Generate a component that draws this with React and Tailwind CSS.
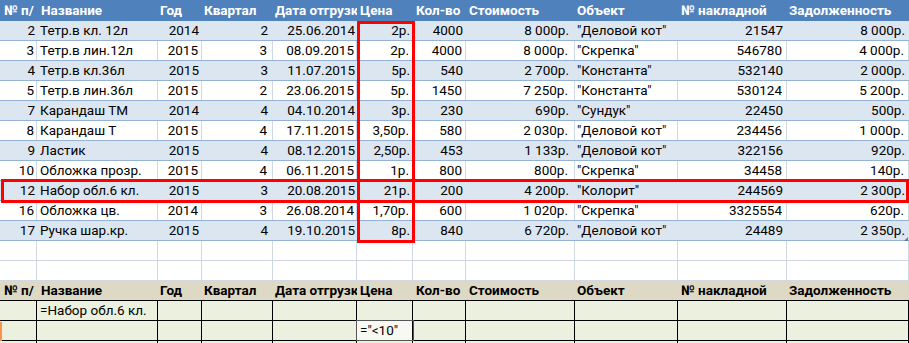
import React from "react";

const COLS = "grid grid-cols-[37px_121px_44px_71px_84px_56px_53px_109px_103px_109px_122px]";

const HEAD = [
  "№ п/",
  "Название",
  "Год",
  "Квартал",
  "Дата отгрузк",
  "Цена",
  "Кол-во",
  "Стоимость",
  "Объект",
  "№ накладной",
  "Задолженность",
];

const ROWS = [
  [2, "Тетр.в кл. 12л", 2014, 2, "25.06.2014", "2р.", 4000, "8 000р.", '"Деловой кот"', 21547, "8 000р."],
  [3, "Тетр.в лин.12л", 2015, 3, "08.09.2015", "2р.", 4000, "8 000р.", '"Скрепка"', 546780, "4 000р."],
  [4, "Тетр.в кл.36л", 2015, 3, "11.07.2015", "5р.", 540, "2 700р.", '"Константа"', 532140, "2 000р."],
  [5, "Тетр.в лин.36л", 2015, 2, "23.06.2015", "5р.", 1450, "7 250р.", '"Константа"', 530124, "5 200р."],
  [7, "Карандаш ТМ", 2014, 4, "04.10.2014", "3р.", 230, "690р.", '"Сундук"', 22450, "500р."],
  [8, "Карандаш Т", 2015, 4, "17.11.2015", "3,50р.", 580, "2 030р.", '"Деловой кот"', 234456, "1 000р."],
  [9, "Ластик", 2015, 4, "08.12.2015", "2,50р.", 453, "1 133р.", '"Деловой кот"', 322156, "920р."],
  [10, "Обложка прозр.", 2015, 4, "06.11.2015", "1р.", 800, "800р.", '"Скрепка"', 34458, "140р."],
  [12, "Набор обл.6 кл.", 2015, 3, "20.08.2015", "21р.", 200, "4 200р.", '"Колорит"', 244569, "2 300р."],
  [16, "Обложка цв.", 2014, 3, "26.08.2014", "1,70р.", 600, "1 020р.", '"Скрепка"', 3325554, "620р."],
  [17, "Ручка шар.кр.", 2015, 4, "19.10.2015", "8р.", 840, "6 720р.", '"Деловой кот"', 24489, "2 350р."],
];

const ALIGN = [
  "justify-end pr-[2px]",
  "justify-start pl-[3px]",
  "justify-end pr-[3px]",
  "justify-end pr-[5px]",
  "justify-end pr-[2px]",
  "justify-end pr-[3px]",
  "justify-end pr-[3px]",
  "justify-end pr-[6px]",
  "justify-start pl-[2px]",
  "justify-end pr-[4px]",
  "justify-end pr-[4px]",
];

const HALIGN = [
  "pl-[4px]",
  "pl-[4px]",
  "pl-[2px]",
  "pl-[2px]",
  "pl-[2px]",
  "pl-[3px]",
  "pl-[3px]",
  "pl-[3px]",
  "pl-[2px]",
  "pl-[3px]",
  "pl-[2px]",
];

function BlueHeader() {
  return (
    <div className={`${COLS} h-[21px] bg-[#4F81BD] text-white font-bold`}>
      {HEAD.map((h, i) => (
        <div key={i} className={`flex items-center overflow-hidden whitespace-nowrap ${HALIGN[i]}`}>
          {h}
        </div>
      ))}
    </div>
  );
}

function DataRow({ row, band }) {
  return (
    <div
      className={`${COLS} h-[20px] border-b border-[#95B3D7] ${band ? "bg-[#DCE6F1]" : "bg-white"}`}
    >
      {row.map((v, i) => (
        <div
          key={i}
          className={`flex items-center overflow-hidden whitespace-nowrap ${ALIGN[i]} ${
            band ? "" : "border-r border-[#D0D7E5]"
          }`}
        >
          {v}
        </div>
      ))}
    </div>
  );
}

function EmptyRow() {
  return (
    <div className={`${COLS} h-[20px] border-b border-[#D0D7E5] bg-white`}>
      {HEAD.map((_, i) => (
        <div key={i} className="border-r border-[#D0D7E5]" />
      ))}
    </div>
  );
}

function TanHeader() {
  return (
    <div className={`${COLS} h-[20px] bg-[#DDD9C4] font-bold text-black border-b border-black`}>
      {HEAD.map((h, i) => (
        <div key={i} className={`flex items-center overflow-hidden whitespace-nowrap ${HALIGN[i]}`}>
          {h}
        </div>
      ))}
    </div>
  );
}

function GreenRow({ cells }) {
  return (
    <div className={`${COLS} h-[20px] bg-[#EBF1DE] border-b border-black`}>
      {HEAD.map((_, i) => {
        const c = cells[i];
        const sel = c && c.sel;
        return (
          <div
            key={i}
            className={`flex items-center overflow-hidden whitespace-nowrap pl-[3px] border-r border-black ${
              sel ? "bg-[#F7F9F2] outline outline-1 outline-[#555]" : ""
            }`}
          >
            {c ? c.text : ""}
          </div>
        );
      })}
    </div>
  );
}

export default function App() {
  return (
    <div
      className="relative w-[909px] h-[343px] overflow-hidden bg-white text-black text-[13.5px] leading-none"
      style={{ fontFamily: "Roboto, 'Liberation Sans', sans-serif" }}
    >
      <BlueHeader />
      {ROWS.map((r, i) => (
        <DataRow key={i} row={r} band={i % 2 === 0} />
      ))}
      <EmptyRow />
      <EmptyRow />
      <TanHeader />
      <GreenRow cells={{ 1: { text: "=Набор обл.6 кл." } }} />
      <GreenRow cells={{ 5: { text: '="<10"', sel: true } }} />
      <div className={`${COLS} h-[20px] bg-[#EBF1DE]`}>
        {HEAD.map((_, i) => (
          <div key={i} className="border-r border-black" />
        ))}
      </div>

      {/* annotations */}
      <div className="absolute left-[357px] top-[21px] w-[58px] h-[222px] border-[3px] border-[#FF0000]" />
      <div className="absolute left-[1px] top-[179px] w-[908px] h-[24px] border-[3px] border-[#FF0000]" />
      <div className="absolute left-[904px] top-[237px] w-0 h-0 border-l-[4px] border-l-transparent border-b-[4px] border-b-[#4F81BD]" />
      <div className="absolute left-0 top-[322px] w-[2px] h-[19px] bg-[#F79646]" />
    </div>
  );
}
